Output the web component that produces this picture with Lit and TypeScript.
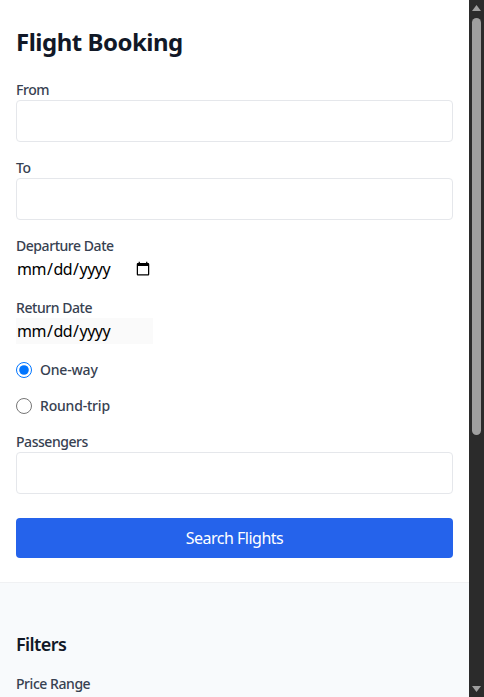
import { LitElement, html, css } from "lit";
import { customElement } from "lit/decorators.js";

@customElement("app-root")
export class AppRoot extends LitElement {
  static styles = css`
    :host {
      display: flex;
      height: 697px;
      overflow: hidden;
      background: #fff;
      font-family: "Noto Sans", "Open Sans", sans-serif;
      color: #111827;
    }
    .page { flex: 1; min-width: 0; overflow: hidden; }
    .form {
      padding: 24px 16px;
      border-bottom: 1px solid #f0f1f3;
      display: flex;
      flex-direction: column;
    }
    h1 { margin: 0 0 20px; font-size: 24px; line-height: 35px; padding-bottom: 1px; font-weight: 700; color: #111827; letter-spacing: -0.5px; }
    .group { display: flex; flex-direction: column; margin-bottom: 16px; }
    label { display: block; font-size: 14px; line-height: 20px; font-weight: 500; color: #374151; letter-spacing: -0.45px; }
    .radio label { letter-spacing: -0.2px; }
    .text {
      box-sizing: border-box;
      height: 42px;
      width: 100%;
      border: 1px solid #e5e7eb;
      border-radius: 4px;
      background: #fff;
      margin: 0;
    }
    .date {
      box-sizing: border-box;
      width: 137px;
      height: 26px;
      margin: 0;
      padding: 0;
      border: none;
      background: #fff;
      font-family: inherit;
      font-size: 16px;
      letter-spacing: -0.5px;
      color: #000;
    }
    .date:disabled { background: #fafafa; color: #000; }
    .radio { display: flex; align-items: center; gap: 8px; height: 20px; margin-bottom: 16px; }
    .radio input { width: 16px; height: 16px; margin: 0; }
    button {
      height: 40px;
      margin-top: 8px;
      border: none;
      border-radius: 4px;
      background: #2563eb;
      color: #fff;
      font-family: inherit;
      font-size: 16px;
      letter-spacing: -0.5px;
    }
    .filters { background: #f8fafc; padding: 48px 16px 0; height: 114px; box-sizing: border-box; }
    h2 { margin: 0 0 15px; font-size: 18px; line-height: 27px; padding-bottom: 1px; font-weight: 600; color: #111827; letter-spacing: -0.6px; }
    .bar {
      flex: 0 0 15px;
      width: 15px;
      background: #2b2b2b;
      display: flex;
      flex-direction: column;
      align-items: center;
    }
    .arrow { width: 15px; height: 17px; flex: none; }
    .track { flex: 1; min-height: 0; display: flex; justify-content: center; align-items: flex-start; }
    .thumb { width: 9px; height: 417px; margin-top: 1px; border-radius: 5px; background: #9f9f9f; }
  `;

  render() {
    return html`
      <div class="page">
        <section class="form">
          <h1>Flight Booking</h1>
          <div class="group"><label>From</label><input class="text" type="text" /></div>
          <div class="group"><label>To</label><input class="text" type="text" /></div>
          <div class="group"><label>Departure Date</label><input class="date" type="date" /></div>
          <div class="group"><label>Return Date</label><input class="date" type="date" disabled /></div>
          <div class="radio"><input type="radio" name="trip" checked /><label>One-way</label></div>
          <div class="radio"><input type="radio" name="trip" /><label>Round-trip</label></div>
          <div class="group"><label>Passengers</label><input class="text" type="text" /></div>
          <button>Search Flights</button>
        </section>
        <section class="filters">
          <h2>Filters</h2>
          <label>Price Range</label>
        </section>
      </div>
      <div class="bar">
        <svg class="arrow" viewBox="0 0 15 17"><path d="M7.5 5 L12 11 H3 Z" fill="#9f9f9f" /></svg>
        <div class="track"><div class="thumb"></div></div>
        <svg class="arrow" viewBox="0 0 15 17"><path d="M7.5 12 L12 6 H3 Z" fill="#9f9f9f" /></svg>
      </div>
    `;
  }
}
